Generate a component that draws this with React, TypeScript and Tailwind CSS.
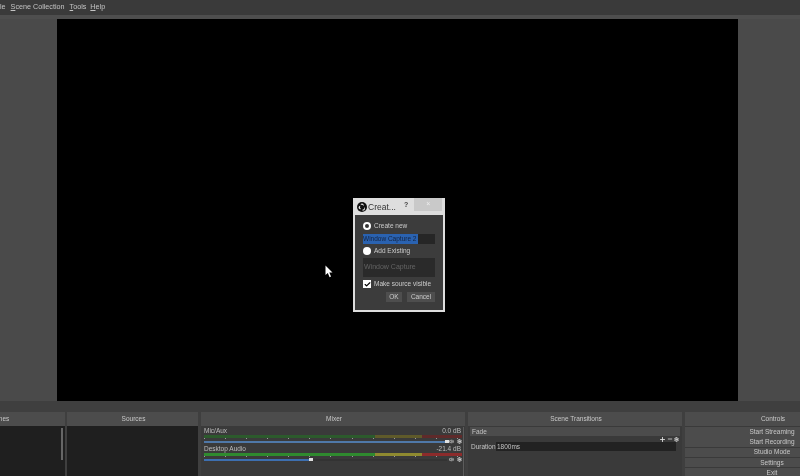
import { Plus, Minus, Settings, Volume2, Check } from "lucide-react";

const ticks = Array.from({ length: 13 });

function DockTitle({ label }: { label: string }) {
  return (
    <div className="flex h-[14px] shrink-0 items-center justify-center bg-[#4c4c4c] pl-[2px] text-[6.5px] text-[#c8c8c8]">
      {label}
    </div>
  );
}

function MixerRow({
  name,
  level,
  handle,
  dim,
}: {
  name: string;
  level: string;
  handle: number;
  dim?: boolean;
}) {
  return (
    <div className="h-[18px]">
      <div className="flex h-[8px] items-center justify-between pr-[1px] text-[6.5px] leading-none text-[#bdbdbd]">
        <span>{name}</span>
        <span>{level}</span>
      </div>
      <div className="flex h-[2.5px]">
        <div className={dim ? "w-[171px] bg-[#2c5a2c]" : "w-[171px] bg-[#2f8a2f]"} />
        <div className={dim ? "w-[47px] bg-[#5f5a2a]" : "w-[47px] bg-[#8f8a30]"} />
        <div className={dim ? "flex-1 bg-[#5f2a2a]" : "flex-1 bg-[#8c2b2b]"} />
      </div>
      <div className="flex h-[2px] justify-between pr-[4px] pt-[0.5px]">
        {ticks.map((_, i) => (
          <div key={i} className="h-[1px] w-[1px] bg-[#9a9a9a]" />
        ))}
      </div>
      <div className="flex h-[4px] items-center">
        <div className="h-[2px] w-[243px] bg-[#333333]">
          <div className={dim ? "relative h-[2px] bg-[#4f78a8]" : "relative h-[2px] bg-[#3d6fb0]"} style={{ width: handle }}>
            <div className="absolute -right-[2px] -top-[0.5px] h-[3px] w-[4px] bg-[#e0e0e0]" />
          </div>
        </div>
        <Volume2 className="ml-[2px] text-[#dddddd]" size={5} strokeWidth={3} />
        <Settings className="ml-[3px] text-[#dddddd]" size={5} strokeWidth={4} />
      </div>
    </div>
  );
}

export default function App() {
  return (
    <div className="relative flex h-[476px] w-[800px] flex-col overflow-hidden bg-[#444444] font-['Liberation_Sans',sans-serif] blur-[0.4px]">
      <div className="flex h-[15px] shrink-0 items-start gap-[4px] bg-[#3a3a3a] pt-[1.5px] text-[7.2px] leading-[10px] text-[#c4c4c4]">
        <span className="-ml-[6px]">
          <u>F</u>ile
        </span>
        <span className="ml-[1px]">
          <u>S</u>cene Collection
        </span>
        <span className="ml-[1px]">
          <u>T</u>ools
        </span>
        <span>
          <u>H</u>elp
        </span>
      </div>
      <div className="h-[4px] shrink-0 bg-[#4e4e4e]" />

      <div className="flex h-[382px] shrink-0 justify-center bg-[#4a4a4a]">
        <div className="ml-[-5px] h-full w-[681px] bg-black" />
      </div>

      <div className="h-[11px] shrink-0 bg-[#3f3f3f]" />

      <div className="flex min-h-0 flex-1 gap-[2px] bg-[#3f3f3f]">
        <div className="-ml-[70px] flex w-[135px] shrink-0 flex-col">
          <DockTitle label="Scenes" />
          <div className="flex flex-1 justify-end bg-[#1f1f1f] pr-[2px]">
            <div className="mt-[2px] h-[32px] w-[2px] bg-[#666666]" />
          </div>
        </div>
        <div className="flex w-[131px] shrink-0 flex-col">
          <DockTitle label="Sources" />
          <div className="flex-1 bg-[#1f1f1f]" />
        </div>
        <div className="ml-[1px] flex w-[264px] shrink-0 flex-col">
          <DockTitle label="Mixer" />
          <div className="flex flex-1 justify-between bg-[#3a3a3a] pl-[3px] pt-[1px]">
            <div className="w-[258px]">
              <MixerRow name="Mic/Aux" level="0.0 dB" handle={243} dim />
              <MixerRow name="Desktop Audio" level="-21.4 dB" handle={107} />
            </div>
            <div className="mr-[1px] w-[1px] bg-[#5c5c5c]" />
          </div>
        </div>
        <div className="ml-[1px] flex w-[214px] shrink-0 flex-col">
          <DockTitle label="Scene Transitions" />
          <div className="flex-1 bg-[#3a3a3a] px-[2px] pt-[1px] text-[6.5px] text-[#c4c4c4]">
            <div className="flex h-[9px] items-center bg-[#4c4c4c] pl-[2px]">Fade</div>
            <div className="flex h-[6px] items-center justify-end gap-[1px] pr-[1px] text-[#e0e0e0]">
              <Plus size={7} strokeWidth={3} />
              <Minus size={6} strokeWidth={3} />
              <Settings size={5} strokeWidth={4} />
            </div>
            <div className="flex h-[9px] items-center">
              <span className="w-[26px] pl-[1px]">Duration</span>
              <span className="flex h-full w-[180px] items-center bg-[#222222] pl-[1px]">1800ms</span>
            </div>
          </div>
        </div>
        <div className="ml-[1px] flex w-[174px] shrink-0 flex-col">
          <DockTitle label="Controls" />
          <div className="flex flex-1 flex-col gap-[0.75px] bg-[#3a3a3a] pt-[1px] text-[6.5px] text-[#c8c8c8]">
            {["Start Streaming", "Start Recording", "Studio Mode", "Settings", "Exit"].map((label) => (
              <div key={label} className="flex h-[9.5px] shrink-0 items-center justify-center bg-[#4c4c4c]">
                {label}
              </div>
            ))}
          </div>
        </div>
      </div>

      <div className="absolute left-[353px] top-[198px] flex h-[114px] w-[92px] flex-col bg-[#dedede] px-[2px] pb-[2px]">
        <div className="flex h-[17px] shrink-0 items-start">
          <svg className="ml-[2px] mt-[4px] h-[10px] w-[10px] shrink-0" viewBox="0 0 10 10">
            <circle cx="5" cy="5" r="5" fill="#111111" />
            <path d="M5 1.6 A1.7 1.7 0 0 1 6.6 3.9 A2.6 2.6 0 0 0 3.6 2.8 A1.7 1.7 0 0 1 5 1.6 Z" fill="#e4e4e4" />
            <path d="M1.9 6.5 A1.7 1.7 0 0 1 3.3 3.8 A2.6 2.6 0 0 0 3.9 7 A1.7 1.7 0 0 1 1.9 6.5 Z" fill="#e4e4e4" />
            <path d="M8 6.6 A1.7 1.7 0 0 1 5 7.9 A2.6 2.6 0 0 0 7.4 5.1 A1.7 1.7 0 0 1 8 6.6 Z" fill="#e4e4e4" />
          </svg>
          <span className="ml-[1px] mt-[3px] w-[29px] text-[8.5px] leading-[12px] text-[#333333]">Creat...</span>
          <span className="ml-[7px] mt-[2px] text-[7px] font-bold leading-[9px] text-[#444444]">?</span>
          <div className="ml-[6px] flex h-[13px] w-[28px] items-center justify-center bg-[#c9c9c9] text-[7px] text-[#eeeeee]">
            ×
          </div>
        </div>
        <div className="flex flex-1 flex-col bg-[#3c3c3c] px-[8px] pt-[6px] text-[6.5px] text-[#cccccc]">
          <div className="flex h-[10px] items-center gap-[3px]">
            <div className="h-[8px] w-[8px] rounded-full border-2 border-white bg-[#333333]" />
            <span>Create new</span>
          </div>
          <div className="mt-[3px] flex h-[10px] w-[72px] bg-[#262626]">
            <span className="flex w-[55px] items-center overflow-hidden whitespace-nowrap bg-[#2a62b0] leading-none text-[#14233f]">
              Window Capture 2
            </span>
          </div>
          <div className="mt-[2px] flex h-[10px] items-center gap-[3px]">
            <div className="h-[8px] w-[8px] rounded-full bg-white" />
            <span>Add Existing</span>
          </div>
          <div className="mt-[2px] flex h-[19px] w-[72px] items-center bg-[#2a2a2a] pl-[1px] text-[7px] text-[#636363]">
            Window Capture
          </div>
          <div className="mt-[2px] flex h-[10px] items-center gap-[3px]">
            <div className="flex h-[8px] w-[8px] items-center justify-center bg-white">
              <Check className="text-black" size={7} strokeWidth={4} />
            </div>
            <span className="whitespace-nowrap">Make source visible</span>
          </div>
          <div className="mt-[3px] flex justify-end gap-[5px]">
            <div className="flex h-[10px] w-[16px] items-center justify-center bg-[#4e4e4e]">OK</div>
            <div className="flex h-[10px] w-[28px] items-center justify-center bg-[#4e4e4e]">Cancel</div>
          </div>
        </div>
      </div>

      <svg className="absolute left-[325px] top-[265px] h-[13px] w-[9px]" viewBox="0 0 9 13">
        <path d="M0.5 0.5 L0.5 10 L2.8 8 L4.6 12.2 L6 11.5 L4.3 7.6 L7.5 7.4 Z" fill="#ffffff" />
      </svg>
    </div>
  );
}
